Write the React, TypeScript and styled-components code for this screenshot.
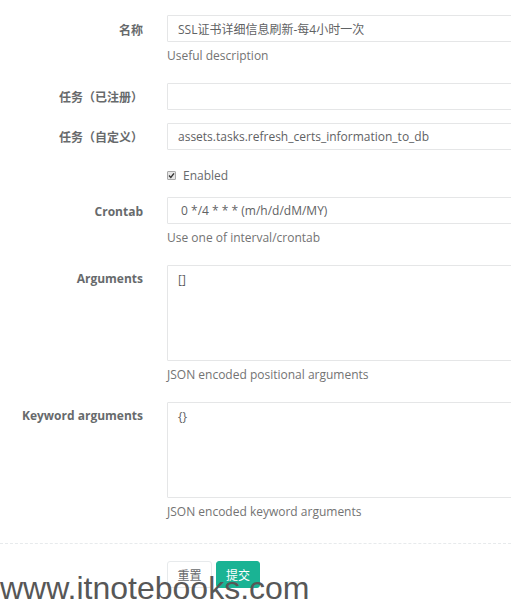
import React from "react";
import styled, { createGlobalStyle } from "styled-components";

const GlobalStyle = createGlobalStyle`
  html, body {
    margin: 0;
    padding: 0;
    background: #ffffff;
    overflow: hidden;
  }
  body {
    font-family: "Open Sans", "Noto Sans CJK SC", sans-serif;
    font-size: 12px;
    color: #676a6c;
  }
  * { box-sizing: border-box; }
`;

const Page = styled.div`
  position: relative;
  width: 511px;
  height: 600px;
  overflow: hidden;
  padding-top: 15px;
`;

const Form = styled.form`
  width: 620px;
  margin: 0;
`;

const FormGroup = styled.div<{ $mb?: number }>`
  display: grid;
  grid-template-columns: 155px 1fr;
  column-gap: 12px;
  margin-bottom: ${(p) => (p.$mb ?? 13)}px;
`;

const Label = styled.label<{ $pt?: number }>`
  text-align: right;
  font-weight: 700;
  line-height: 17px;
  padding-top: ${(p) => (p.$pt ?? 6)}px;
  padding-right: 12px;
  color: #676a6c;
  white-space: nowrap;
`;

const Control = styled.div<{ $pt?: number }>`
  display: flex;
  flex-direction: column;
  padding-top: ${(p) => (p.$pt ?? 0)}px;
`;

const TextInput = styled.input`
  height: 27px;
  width: 100%;
  border: 1px solid #e5e6e7;
  border-radius: 1px;
  padding: 0 10px;
  font-family: inherit;
  font-size: 12px;
  color: #5f6264;
  background: #ffffff;
  outline: none;
`;

const TextArea = styled.textarea`
  height: 96px;
  width: 100%;
  border: 1px solid #e5e6e7;
  border-radius: 1px;
  padding: 5px 10px;
  font-family: inherit;
  font-size: 12px;
  line-height: 17px;
  color: #5f6264;
  background: #ffffff;
  resize: none;
  outline: none;
`;

const Help = styled.span`
  display: block;
  margin: 5px 0 6px;
  line-height: 17px;
  color: #737373;
`;

const CheckRow = styled.label`
  display: flex;
  align-items: center;
  gap: 7px;
  height: 21px;
  padding-top: 4px;
  line-height: 17px;
  color: #676a6c;
`;

const CheckBox = styled.span`
  width: 9px;
  height: 9px;
  border: 1px solid #a9a9a9;
  background: #e6e6e6;
  border-radius: 1px;
  display: inline-flex;
  align-items: center;
  justify-content: center;
`;

const Divider = styled.div`
  border-top: 1px dashed #e7eaec;
  margin: 17px 0 17px;
  width: 511px;
`;

const Buttons = styled.div`
  display: flex;
  gap: 4px;
`;

const Button = styled.button<{ $primary?: boolean }>`
  height: 27px;
  padding: 0 ${(p) => (p.$primary ? 9 : 9.5)}px;
  font-family: inherit;
  font-size: 12px;
  border-radius: 3px;
  border: 1px solid ${(p) => (p.$primary ? "#1ab394" : "#e7eaec")};
  background: ${(p) => (p.$primary ? "#1ab394" : "#ffffff")};
  color: ${(p) => (p.$primary ? "#ffffff" : "#676a6c")};
  cursor: pointer;
`;

const Watermark = styled.div`
  position: absolute;
  left: 0;
  top: 572px;
  font-family: "Liberation Sans", Arial, sans-serif;
  font-size: 32px;
  line-height: 32px;
  color: #575757;
  white-space: nowrap;
  pointer-events: none;
`;

export default function App() {
  return (
    <>
      <GlobalStyle />
      <Page>
        <Form onSubmit={(e) => e.preventDefault()}>
          <FormGroup $mb={0}>
            <Label $pt={7}>名称</Label>
            <Control>
              <TextInput defaultValue="SSL证书详细信息刷新-每4小时一次" />
              <Help>Useful description</Help>
            </Control>
          </FormGroup>
          <FormGroup>
            <Label $pt={19}>任务（已注册）</Label>
            <Control $pt={13}>
              <TextInput defaultValue="" />
            </Control>
          </FormGroup>
          <FormGroup>
            <Label>任务（自定义）</Label>
            <Control>
              <TextInput defaultValue="assets.tasks.refresh_certs_information_to_db" />
            </Control>
          </FormGroup>
          <FormGroup>
            <span />
            <CheckRow>
              <CheckBox>
                <svg width="7" height="7" viewBox="0 0 7 7">
                  <path d="M1 3.6 L2.8 5.4 L6 1.4" stroke="#333" strokeWidth="1.4" fill="none" />
                </svg>
              </CheckBox>
              Enabled
            </CheckRow>
          </FormGroup>
          <FormGroup $mb={0}>
            <Label>Crontab</Label>
            <Control>
              <TextInput defaultValue=" 0 */4 * * * (m/h/d/dM/MY)" />
              <Help>Use one of interval/crontab</Help>
            </Control>
          </FormGroup>
          <FormGroup $mb={0}>
            <Label $pt={18}>Arguments</Label>
            <Control $pt={13}>
              <TextArea defaultValue="[]" />
              <Help>JSON encoded positional arguments</Help>
            </Control>
          </FormGroup>
          <FormGroup>
            <Label $pt={18}>Keyword arguments</Label>
            <Control $pt={13}>
              <TextArea defaultValue="{}" />
              <Help>JSON encoded keyword arguments</Help>
            </Control>
          </FormGroup>
          <Divider />
          <FormGroup>
            <span />
            <Buttons>
              <Button type="reset">重置</Button>
              <Button type="submit" $primary>
                提交
              </Button>
            </Buttons>
          </FormGroup>
        </Form>
        <Watermark>www.itnotebooks.com</Watermark>
      </Page>
    </>
  );
}
